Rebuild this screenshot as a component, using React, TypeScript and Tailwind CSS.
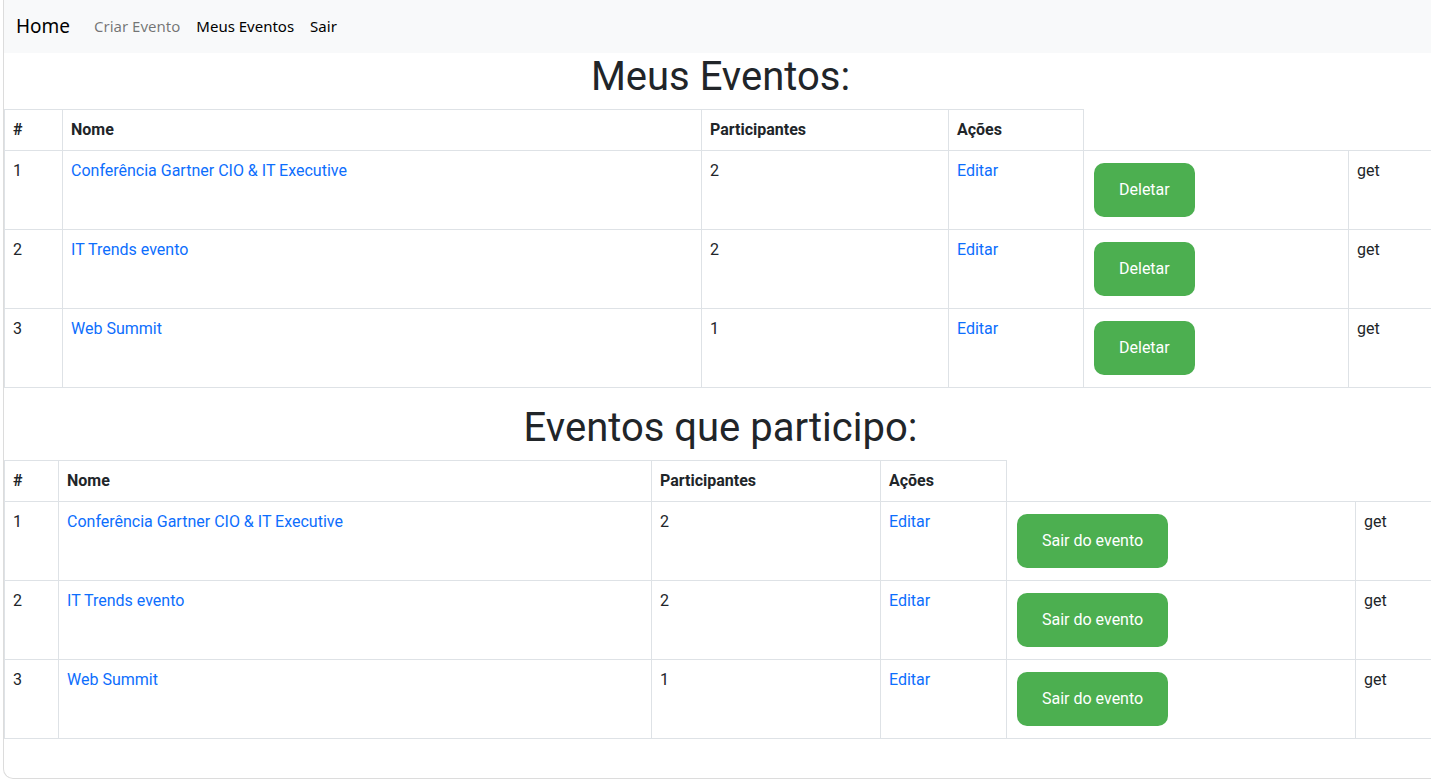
import React from "react";

const eventos = [
  { id: 1, nome: "Conferência Gartner CIO & IT Executive", participantes: 2 },
  { id: 2, nome: "IT Trends evento", participantes: 2 },
  { id: 3, nome: "Web Summit", participantes: 1 },
];

const cell = "border border-[#dee2e6] px-2 py-2 align-top text-left";

function EventTable({
  cols,
  label,
  tableWidth,
}: {
  cols: string[];
  label: string;
  tableWidth: string;
}) {
  return (
    <table className={`table-fixed border-collapse mb-4 ${tableWidth}`}>
      <colgroup>
        {cols.map((c, i) => (
          <col key={i} className={c} />
        ))}
      </colgroup>
      <thead>
        <tr className="font-bold">
          <th className={cell}>#</th>
          <th className={cell}>Nome</th>
          <th className={cell}>Participantes</th>
          <th className={cell}>Ações</th>
        </tr>
      </thead>
      <tbody>
        {eventos.map((e) => (
          <tr key={e.id}>
            <td className={cell}>{e.id}</td>
            <td className={cell}>
              <a className="text-[#0d6efd]">{e.nome}</a>
            </td>
            <td className={cell}>{e.participantes}</td>
            <td className={cell}>
              <a className="text-[#0d6efd]">Editar</a>
            </td>
            <td className={cell}>
              <button className="mx-[2px] my-1 rounded-[10px] bg-[#4caf50] px-[25px] py-[15px] leading-6 text-white">
                {label}
              </button>
            </td>
            <td className={cell}>get</td>
          </tr>
        ))}
      </tbody>
    </table>
  );
}

export default function App() {
  return (
    <div className="h-[781px] w-[1431px] overflow-hidden bg-white pl-[3px] font-['Roboto',sans-serif] text-base leading-6 text-[#212529]">
      <div className="h-[779px] w-[1434px] overflow-hidden rounded-bl-[10px] border-b border-l border-[#dcdcdc]">
        <nav className="flex h-[53px] items-center bg-[#f8f9fa] px-3 pb-px font-['Noto_Sans',sans-serif]">
          <span className="mr-4 text-[19px] text-black">Home</span>
          <span className="px-2 text-[15px] text-black/55">Criar Evento</span>
          <span className="px-2 text-[15px] text-black">Meus Eventos</span>
          <span className="px-2 text-[15px] text-black">Sair</span>
        </nav>
        <h1 className="mb-2 text-center text-[40px] leading-[48px] font-normal">Meus Eventos:</h1>
        <EventTable
          label="Deletar"
          tableWidth="w-[1444px]"
          cols={["w-[58px]", "w-[639px]", "w-[247px]", "w-[135px]", "w-[265px]", "w-[100px]"]}
        />
        <h1 className="mb-2 text-center text-[40px] leading-[48px] font-normal">Eventos que participo:</h1>
        <EventTable
          label="Sair do evento"
          tableWidth="w-[1451px]"
          cols={["w-[54px]", "w-[593px]", "w-[229px]", "w-[126px]", "w-[349px]", "w-[100px]"]}
        />
      </div>
    </div>
  );
}
